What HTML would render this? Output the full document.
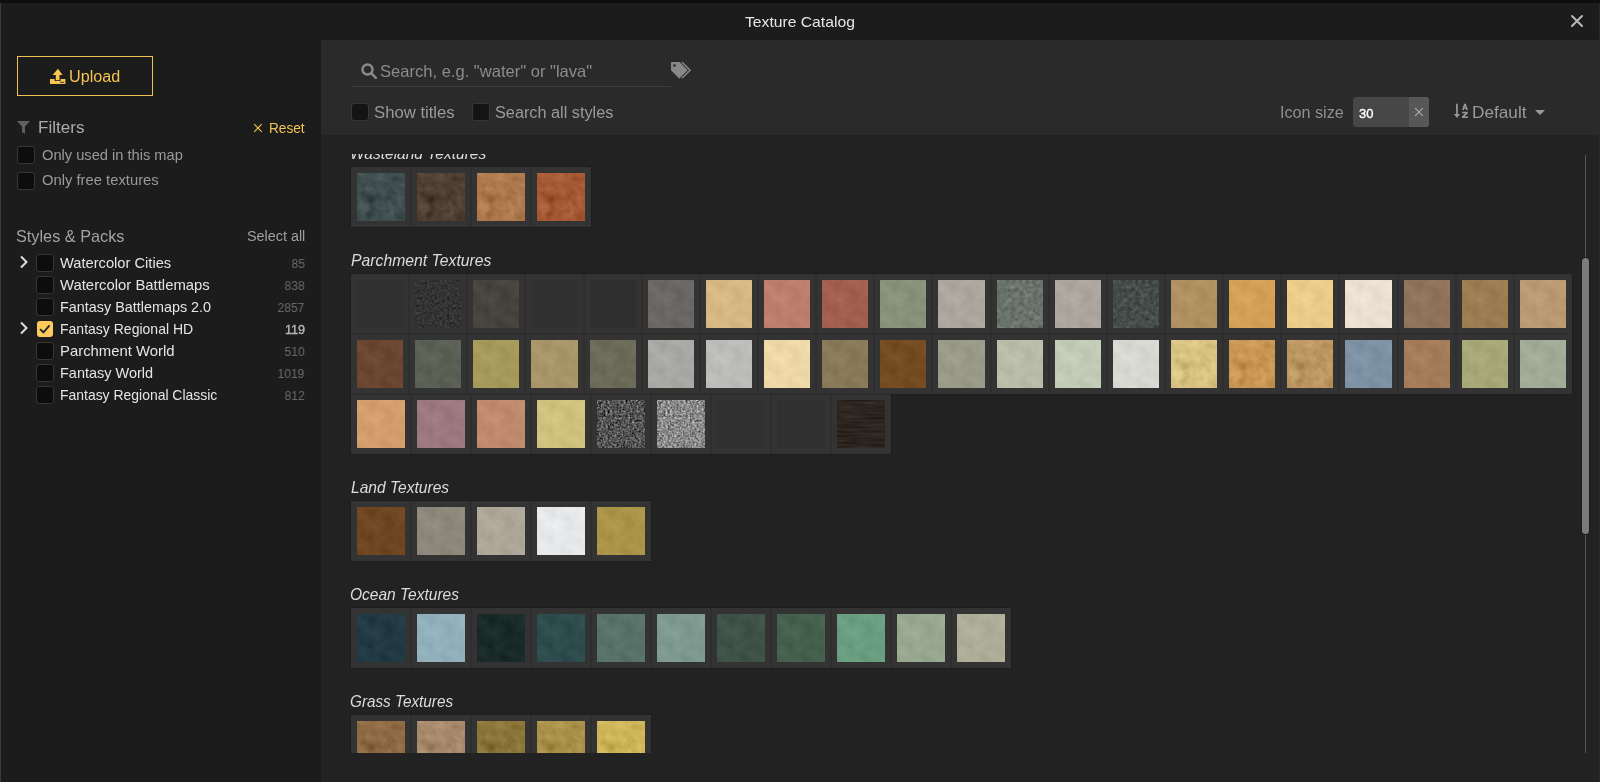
<!DOCTYPE html>
<html><head><meta charset="utf-8"><title>Texture Catalog</title>
<style>
html,body{margin:0;padding:0;}
body{width:1600px;height:782px;overflow:hidden;background:#1c1c1c;position:relative;font-family:"Liberation Sans",sans-serif;}
.t{position:absolute;white-space:nowrap;line-height:1;}
.r{position:absolute;}
</style></head><body>
<svg width="0" height="0" style="position:absolute"><defs>
<filter id="m" x="0" y="0" width="100%" height="100%" color-interpolation-filters="sRGB">
<feTurbulence type="fractalNoise" baseFrequency="0.1" numOctaves="4" seed="7" result="t"/>
<feColorMatrix in="t" type="matrix" values="0.33 0.33 0.33 0 0  0.33 0.33 0.33 0 0  0.33 0.33 0.33 0 0  0 0 0 0 1" result="g"/>
<feComposite in="SourceGraphic" in2="g" operator="arithmetic" k1="0" k2="1" k3="0.35" k4="-0.175" result="b"/>
<feComposite in="b" in2="SourceGraphic" operator="in"/>
</filter>
<filter id="s" x="0" y="0" width="100%" height="100%" color-interpolation-filters="sRGB">
<feTurbulence type="fractalNoise" baseFrequency="0.08" numOctaves="4" seed="11" result="t"/>
<feColorMatrix in="t" type="matrix" values="0.33 0.33 0.33 0 0  0.33 0.33 0.33 0 0  0.33 0.33 0.33 0 0  0 0 0 0 1" result="g"/>
<feComposite in="SourceGraphic" in2="g" operator="arithmetic" k1="0" k2="1" k3="0.16" k4="-0.08" result="b"/>
<feComposite in="b" in2="SourceGraphic" operator="in"/>
</filter>
<filter id="l" x="0" y="0" width="100%" height="100%" color-interpolation-filters="sRGB">
<feTurbulence type="fractalNoise" baseFrequency="0.04 0.45" numOctaves="2" seed="3" result="t"/>
<feColorMatrix in="t" type="matrix" values="0.33 0.33 0.33 0 0  0.33 0.33 0.33 0 0  0.33 0.33 0.33 0 0  0 0 0 0 1" result="g"/>
<feComposite in="SourceGraphic" in2="g" operator="arithmetic" k1="0" k2="1" k3="0.25" k4="-0.14" result="b"/>
<feComposite in="b" in2="SourceGraphic" operator="in"/>
</filter>
<filter id="g" x="0" y="0" width="100%" height="100%" color-interpolation-filters="sRGB">
<feTurbulence type="fractalNoise" baseFrequency="0.45" numOctaves="3" seed="5" result="t"/>
<feColorMatrix in="t" type="matrix" values="0.33 0.33 0.33 0 0  0.33 0.33 0.33 0 0  0.33 0.33 0.33 0 0  0 0 0 0 1" result="g"/>
<feComposite in="SourceGraphic" in2="g" operator="arithmetic" k1="0" k2="1" k3="1.5" k4="-0.75" result="b"/>
<feComposite in="b" in2="SourceGraphic" operator="in"/>
</filter>
<filter id="g3" x="0" y="0" width="100%" height="100%" color-interpolation-filters="sRGB">
<feTurbulence type="fractalNoise" baseFrequency="0.22" numOctaves="4" seed="4" result="t"/>
<feColorMatrix in="t" type="matrix" values="0.33 0.33 0.33 0 0  0.33 0.33 0.33 0 0  0.33 0.33 0.33 0 0  0 0 0 0 1" result="g"/>
<feComposite in="SourceGraphic" in2="g" operator="arithmetic" k1="0" k2="1" k3="0.42" k4="-0.21" result="b"/>
<feComposite in="b" in2="SourceGraphic" operator="in"/>
</filter>
<filter id="g2" x="0" y="0" width="100%" height="100%" color-interpolation-filters="sRGB">
<feTurbulence type="fractalNoise" baseFrequency="0.4" numOctaves="3" seed="9" result="t"/>
<feColorMatrix in="t" type="matrix" values="0.33 0.33 0.33 0 0  0.33 0.33 0.33 0 0  0.33 0.33 0.33 0 0  0 0 0 0 1" result="g"/>
<feComposite in="SourceGraphic" in2="g" operator="arithmetic" k1="0" k2="1" k3="0.38" k4="-0.2" result="b"/>
<feComposite in="b" in2="SourceGraphic" operator="in"/>
</filter>
</defs></svg>
<div class="r" style="left:0px;top:0px;width:1600px;height:3px;background:#0e0e0e;"></div>
<div class="r" style="left:0px;top:3px;width:1px;height:779px;background:#3a3a3a;"></div>
<div class="r" style="left:1599px;top:3px;width:1px;height:779px;background:#2a2a2a;"></div>
<div class="t" style="left:745.30px;top:13.90px;font-size:15px;color:#e6e6e6;transform:scaleX(1.0457);transform-origin:0 0;">Texture Catalog</div>
<svg class="r" style="left:1569px;top:13px" width="16" height="16" viewBox="0 0 16 16"><path d="M3 3L13 13M13 3L3 13" stroke="#b8b8b8" stroke-width="2" stroke-linecap="round"/></svg>
<div class="r" style="left:320px;top:39px;width:1279px;height:743px;background:#1a1a1a;"></div>
<div class="r" style="left:321px;top:40px;width:1278px;height:95px;background:#2a2a2a;"></div>
<div class="r" style="left:321px;top:135px;width:1278px;height:647px;background:#222222;"></div>
<div class="r" style="left:17px;top:56px;width:134px;height:38px;border:1px solid #f2c14e;"></div>
<svg class="r" style="left:50px;top:68px" width="16" height="17" viewBox="0 0 16 17"><path d="M8 0.7L2.5 7H5.8V12.3H9.5V7H12.6Z" fill="#f5c451"/><path d="M-0.1 11H4.7V13.1H10.6V11H15.4V16.1H-0.1Z" fill="#f5c451"/><rect x="10.3" y="13.8" width="1.5" height="1.1" fill="#1c1c1c"/><rect x="12.3" y="13.8" width="1.5" height="1.1" fill="#1c1c1c"/></svg>
<div class="t" style="left:68.79px;top:68.96px;font-size:16px;color:#f5c451;transform:scaleX(1.0102);transform-origin:0 0;">Upload</div>
<svg class="r" style="left:17px;top:121px" width="13" height="13" viewBox="0 0 13 13"><path d="M0 0H13L8 5.5V13L5 11V5.5Z" fill="#606060"/></svg>
<div class="t" style="left:37.97px;top:119.95px;font-size:16.6px;color:#ababab;transform:scaleX(1.0273);transform-origin:0 0;">Filters</div>
<svg class="r" style="left:253px;top:123px" width="10" height="10" viewBox="0 0 10 10"><path d="M1.2 1.2L8.8 8.8M8.8 1.2L1.2 8.8" stroke="#f5c451" stroke-width="1.1"/></svg>
<div class="t" style="left:269.23px;top:121.15px;font-size:14px;color:#f5c451;transform:scaleX(0.9722);transform-origin:0 0;">Reset</div>
<div class="r" style="left:17px;top:146px;width:16px;height:16px;background:#0d0d0d;border:1px solid #3a3530;border-radius:3px;"></div>
<div class="t" style="left:41.80px;top:147.94px;font-size:14.6px;color:#9a9a9a;transform:scaleX(1.0036);transform-origin:0 0;">Only used in this map</div>
<div class="r" style="left:17px;top:172px;width:16px;height:16px;background:#0d0d0d;border:1px solid #3a3530;border-radius:3px;"></div>
<div class="t" style="left:41.80px;top:173.44px;font-size:14.6px;color:#9a9a9a;transform:scaleX(1.0130);transform-origin:0 0;">Only free textures</div>
<div class="t" style="left:16.21px;top:228.42px;font-size:16.4px;color:#a3a3a3;transform:scaleX(0.9917);transform-origin:0 0;">Styles &amp; Packs</div>
<div class="t" style="left:247.17px;top:229.15px;font-size:14px;color:#a0a0a0;transform:scaleX(1.0255);transform-origin:0 0;">Select all</div>
<svg class="r" style="left:19px;top:255px" width="10" height="14" viewBox="0 0 10 14"><path d="M2 1.5L7.5 7L2 12.5" stroke="#dedede" stroke-width="2" fill="none"/></svg>
<div class="r" style="left:36px;top:254px;width:16px;height:16px;background:#0d0d0d;border:1px solid #3a3530;border-radius:3px;"></div>
<div class="t" style="left:60.10px;top:255.64px;font-size:14.6px;color:#e4e4e4;transform:scaleX(1.0055);transform-origin:0 0;">Watercolor Cities</div>
<div class="t" style="left:291.60px;top:257.64px;font-size:12px;color:#666;">85</div>
<div class="r" style="left:36px;top:276px;width:16px;height:16px;background:#0d0d0d;border:1px solid #3a3530;border-radius:3px;"></div>
<div class="t" style="left:60.10px;top:277.64px;font-size:14.6px;color:#e4e4e4;transform:scaleX(1.0184);transform-origin:0 0;">Watercolor Battlemaps</div>
<div class="t" style="left:284.60px;top:279.64px;font-size:12px;color:#666;">838</div>
<div class="r" style="left:36px;top:298px;width:16px;height:16px;background:#0d0d0d;border:1px solid #3a3530;border-radius:3px;"></div>
<div class="t" style="left:60.01px;top:299.64px;font-size:14.6px;color:#e4e4e4;transform:scaleX(0.9855);transform-origin:0 0;">Fantasy Battlemaps 2.0</div>
<div class="t" style="left:277.60px;top:301.64px;font-size:12px;color:#666;">2857</div>
<svg class="r" style="left:19px;top:321px" width="10" height="14" viewBox="0 0 10 14"><path d="M2 1.5L7.5 7L2 12.5" stroke="#dedede" stroke-width="2" fill="none"/></svg>
<div class="r" style="left:37px;top:321px;width:16px;height:16px;background:#fccb5c;border-radius:3px;"></div>
<svg class="r" style="left:37px;top:321px" width="16" height="16" viewBox="0 0 17 17"><path d="M3.2 8.6L6.8 12L13.4 4.6" stroke="#262626" stroke-width="2" fill="none"/></svg>
<div class="t" style="left:60.04px;top:321.64px;font-size:14.6px;color:#e4e4e4;transform:scaleX(0.9601);transform-origin:0 0;">Fantasy Regional HD</div>
<div class="t" style="left:284.60px;top:323.64px;font-size:12px;color:#b8b8b8;-webkit-text-stroke:0.35px #b8b8b8;transform:scaleX(1.0526);transform-origin:0 0;">119</div>
<div class="r" style="left:36px;top:342px;width:16px;height:16px;background:#0d0d0d;border:1px solid #3a3530;border-radius:3px;"></div>
<div class="t" style="left:59.98px;top:343.64px;font-size:14.6px;color:#e4e4e4;transform:scaleX(1.0189);transform-origin:0 0;">Parchment World</div>
<div class="t" style="left:284.60px;top:345.64px;font-size:12px;color:#666;">510</div>
<div class="r" style="left:36px;top:364px;width:16px;height:16px;background:#0d0d0d;border:1px solid #3a3530;border-radius:3px;"></div>
<div class="t" style="left:60.01px;top:365.64px;font-size:14.6px;color:#e4e4e4;transform:scaleX(0.9924);transform-origin:0 0;">Fantasy World</div>
<div class="t" style="left:277.60px;top:367.64px;font-size:12px;color:#666;">1019</div>
<div class="r" style="left:36px;top:386px;width:16px;height:16px;background:#0d0d0d;border:1px solid #3a3530;border-radius:3px;"></div>
<div class="t" style="left:60.04px;top:387.64px;font-size:14.6px;color:#e4e4e4;transform:scaleX(0.9552);transform-origin:0 0;">Fantasy Regional Classic</div>
<div class="t" style="left:284.60px;top:389.64px;font-size:12px;color:#666;">812</div>
<svg class="r" style="left:361px;top:63px" width="16" height="16" viewBox="0 0 16 16"><circle cx="6.5" cy="6.5" r="5" stroke="#8a8a8a" stroke-width="2.4" fill="none"/><path d="M10.2 10.2L14.8 14.8" stroke="#8a8a8a" stroke-width="2.6" stroke-linecap="round"/></svg>
<div class="t" style="left:380.30px;top:63.13px;font-size:16.5px;color:#8c8c8c;transform:scaleX(1.0033);transform-origin:0 0;">Search, e.g. "water" or "lava"</div>
<div class="r" style="left:351px;top:86px;width:320px;height:1px;background:#433e38;"></div>
<svg class="r" style="left:670px;top:61px" width="24" height="20" viewBox="-1 -1 24 20"><path fill-rule="evenodd" d="M0.6 0.6H8.3L15.9 8.2L8.3 15.8L0.6 8.1ZM3.5 2.2A1.3 1.3 0 1 0 3.51 2.2Z" fill="#888" stroke="#888" stroke-width="1.2" stroke-linejoin="round"/><circle cx="3.5" cy="3.5" r="1.3" fill="#2a2a2a"/><path d="M10.6 0.5H12.1L19.8 8.2L12.1 15.9H10.6L18.3 8.2Z" fill="#888" stroke="#888" stroke-width="0.6" stroke-linejoin="round"/></svg>
<div class="r" style="left:351px;top:103px;width:16px;height:16px;background:#141414;border:1px solid #3a3530;border-radius:3px;"></div>
<div class="t" style="left:374.49px;top:103.73px;font-size:16.5px;color:#9a9a9a;transform:scaleX(1.0114);transform-origin:0 0;">Show titles</div>
<div class="r" style="left:472px;top:103px;width:16px;height:16px;background:#141414;border:1px solid #3a3530;border-radius:3px;"></div>
<div class="t" style="left:495.48px;top:104.86px;font-size:16px;color:#9a9a9a;transform:scaleX(1.0165);transform-origin:0 0;">Search all styles</div>
<div class="t" style="left:1280.48px;top:104.83px;font-size:15.8px;color:#8f8f8f;transform:scaleX(1.0230);transform-origin:0 0;">Icon size</div>
<div class="r" style="left:1353px;top:97px;width:76px;height:30px;background:#474747;border-radius:3px;"></div>
<div class="r" style="left:1409px;top:97px;width:20px;height:30px;background:#575757;border-radius:0 3px 3px 0;"></div>
<svg class="r" style="left:1414px;top:107px" width="10" height="10" viewBox="0 0 10 10"><path d="M1.2 1.2L8.8 8.8M8.8 1.2L1.2 8.8" stroke="#b0b0b0" stroke-width="1.1"/></svg>
<div class="t" style="left:1359.00px;top:106.63px;font-size:13.2px;color:#ffffff;-webkit-text-stroke:0.35px #fff;transform:scaleX(0.9867);transform-origin:0 0;">30</div>
<svg class="r" style="left:1453px;top:103px" width="16" height="16" viewBox="0 0 16 16"><path d="M3.1 0.8H4.8V11.5H3.1Z" fill="#999"/><path d="M0.9 11.1H7L3.95 14.9Z" fill="#999"/><path fill-rule="evenodd" d="M9 7L11.2 0.8H12.8L15 7H13.3L12.9 5.8H11.1L10.7 7ZM11.45 4.6H12.55L12 2.9Z" fill="#999"/><path d="M9.2 8.8H14.8V10.2L11.5 13.5H15V14.9H9V13.5L12.3 10.2H9.2Z" fill="#999"/></svg>
<div class="t" style="left:1472.39px;top:103.61px;font-size:17px;color:#9a9a9a;transform:scaleX(1.0113);transform-origin:0 0;">Default</div>
<svg class="r" style="left:1535px;top:110px" width="10" height="5" viewBox="0 0 10 5"><path d="M0 0H10L5 5Z" fill="#999"/></svg>
<div class="r" style="left:321px;top:154px;width:1278px;height:599px;overflow:hidden;"><div style="position:absolute;left:-321px;top:-154px;width:1600px;height:900px;">
<div class="t" style="left:350.09px;top:145.11px;font-size:17px;color:#dcdcdc;font-style:italic;transform:scaleX(0.9122);transform-origin:0 0;">Wasteland Textures</div>
<div class="r" style="left:350px;top:166px;width:242px;height:62px;background:#1d1d1d;"></div>
<div class="r" style="left:351px;top:167px;width:240px;height:60px;background:#333333;"></div>
<svg class="r" style="left:357px;top:173px" width="48" height="48"><rect width="48" height="48" fill="#3f4d4f" filter="url(#m)"/></svg>
<svg class="r" style="left:417px;top:173px" width="48" height="48"><rect width="48" height="48" fill="#4e3f32" filter="url(#m)"/></svg>
<svg class="r" style="left:477px;top:173px" width="48" height="48"><rect width="48" height="48" fill="#ad784c" filter="url(#m)"/></svg>
<svg class="r" style="left:537px;top:173px" width="48" height="48"><rect width="48" height="48" fill="#a45833" filter="url(#m)"/></svg>
<div class="r" style="left:410px;top:167px;width:2px;height:60px;background:#2e2e2e;"></div>
<div class="r" style="left:470px;top:167px;width:2px;height:60px;background:#2e2e2e;"></div>
<div class="r" style="left:530px;top:167px;width:2px;height:60px;background:#2e2e2e;"></div>
<div class="t" style="left:351.00px;top:251.61px;font-size:17px;color:#dcdcdc;font-style:italic;transform:scaleX(0.9272);transform-origin:0 0;">Parchment Textures</div>
<div class="r" style="left:350px;top:273px;width:1223px;height:62px;background:#1d1d1d;"></div>
<div class="r" style="left:350px;top:333px;width:1223px;height:62px;background:#1d1d1d;"></div>
<div class="r" style="left:350px;top:393px;width:542px;height:62px;background:#1d1d1d;"></div>
<div class="r" style="left:351px;top:274px;width:1221px;height:60px;background:#333333;"></div>
<svg class="r" style="left:357px;top:280px" width="46" height="48"><rect width="46" height="48" fill="#313131"/></svg>
<svg class="r" style="left:415px;top:280px" width="46" height="48"><rect width="46" height="48" fill="#363636" filter="url(#g2)"/></svg>
<svg class="r" style="left:473px;top:280px" width="46" height="48"><rect width="46" height="48" fill="#47433f" filter="url(#s)"/></svg>
<svg class="r" style="left:531px;top:280px" width="47" height="48"><rect width="47" height="48" fill="#313131"/></svg>
<svg class="r" style="left:590px;top:280px" width="46" height="48"><rect width="46" height="48" fill="#2f2f2f"/></svg>
<svg class="r" style="left:648px;top:280px" width="46" height="48"><rect width="46" height="48" fill="#6b6764" filter="url(#s)"/></svg>
<svg class="r" style="left:706px;top:280px" width="46" height="48"><rect width="46" height="48" fill="#d6b883" filter="url(#s)"/></svg>
<svg class="r" style="left:764px;top:280px" width="46" height="48"><rect width="46" height="48" fill="#bd7f6c" filter="url(#s)"/></svg>
<svg class="r" style="left:822px;top:280px" width="46" height="48"><rect width="46" height="48" fill="#a25f4f" filter="url(#s)"/></svg>
<svg class="r" style="left:880px;top:280px" width="46" height="48"><rect width="46" height="48" fill="#88927a" filter="url(#s)"/></svg>
<svg class="r" style="left:938px;top:280px" width="47" height="48"><rect width="47" height="48" fill="#ada69e" filter="url(#s)"/></svg>
<svg class="r" style="left:997px;top:280px" width="46" height="48"><rect width="46" height="48" fill="#6a726c" filter="url(#g3)"/></svg>
<svg class="r" style="left:1055px;top:280px" width="46" height="48"><rect width="46" height="48" fill="#ada69e" filter="url(#s)"/></svg>
<svg class="r" style="left:1113px;top:280px" width="46" height="48"><rect width="46" height="48" fill="#464c4a" filter="url(#g3)"/></svg>
<svg class="r" style="left:1171px;top:280px" width="46" height="48"><rect width="46" height="48" fill="#b09060" filter="url(#s)"/></svg>
<svg class="r" style="left:1229px;top:280px" width="46" height="48"><rect width="46" height="48" fill="#d4a055" filter="url(#s)"/></svg>
<svg class="r" style="left:1287px;top:280px" width="46" height="48"><rect width="46" height="48" fill="#ebcc88" filter="url(#s)"/></svg>
<svg class="r" style="left:1345px;top:280px" width="47" height="48"><rect width="47" height="48" fill="#ebe0d2" filter="url(#s)"/></svg>
<svg class="r" style="left:1404px;top:280px" width="46" height="48"><rect width="46" height="48" fill="#8f735a" filter="url(#s)"/></svg>
<svg class="r" style="left:1462px;top:280px" width="46" height="48"><rect width="46" height="48" fill="#9c7c50" filter="url(#s)"/></svg>
<svg class="r" style="left:1520px;top:280px" width="46" height="48"><rect width="46" height="48" fill="#b99a72" filter="url(#s)"/></svg>
<div class="r" style="left:408px;top:274px;width:2px;height:60px;background:#2e2e2e;"></div>
<div class="r" style="left:466px;top:274px;width:2px;height:60px;background:#2e2e2e;"></div>
<div class="r" style="left:524px;top:274px;width:2px;height:60px;background:#2e2e2e;"></div>
<div class="r" style="left:583px;top:274px;width:2px;height:60px;background:#2e2e2e;"></div>
<div class="r" style="left:641px;top:274px;width:2px;height:60px;background:#2e2e2e;"></div>
<div class="r" style="left:699px;top:274px;width:2px;height:60px;background:#2e2e2e;"></div>
<div class="r" style="left:757px;top:274px;width:2px;height:60px;background:#2e2e2e;"></div>
<div class="r" style="left:815px;top:274px;width:2px;height:60px;background:#2e2e2e;"></div>
<div class="r" style="left:873px;top:274px;width:2px;height:60px;background:#2e2e2e;"></div>
<div class="r" style="left:931px;top:274px;width:2px;height:60px;background:#2e2e2e;"></div>
<div class="r" style="left:990px;top:274px;width:2px;height:60px;background:#2e2e2e;"></div>
<div class="r" style="left:1048px;top:274px;width:2px;height:60px;background:#2e2e2e;"></div>
<div class="r" style="left:1106px;top:274px;width:2px;height:60px;background:#2e2e2e;"></div>
<div class="r" style="left:1164px;top:274px;width:2px;height:60px;background:#2e2e2e;"></div>
<div class="r" style="left:1222px;top:274px;width:2px;height:60px;background:#2e2e2e;"></div>
<div class="r" style="left:1280px;top:274px;width:2px;height:60px;background:#2e2e2e;"></div>
<div class="r" style="left:1338px;top:274px;width:2px;height:60px;background:#2e2e2e;"></div>
<div class="r" style="left:1397px;top:274px;width:2px;height:60px;background:#2e2e2e;"></div>
<div class="r" style="left:1455px;top:274px;width:2px;height:60px;background:#2e2e2e;"></div>
<div class="r" style="left:1513px;top:274px;width:2px;height:60px;background:#2e2e2e;"></div>
<div class="r" style="left:351px;top:334px;width:1221px;height:60px;background:#333333;"></div>
<svg class="r" style="left:357px;top:340px" width="46" height="48"><rect width="46" height="48" fill="#6b4630" filter="url(#s)"/></svg>
<svg class="r" style="left:415px;top:340px" width="46" height="48"><rect width="46" height="48" fill="#5b6054" filter="url(#s)"/></svg>
<svg class="r" style="left:473px;top:340px" width="46" height="48"><rect width="46" height="48" fill="#a69a5a" filter="url(#s)"/></svg>
<svg class="r" style="left:531px;top:340px" width="47" height="48"><rect width="47" height="48" fill="#a89668" filter="url(#s)"/></svg>
<svg class="r" style="left:590px;top:340px" width="46" height="48"><rect width="46" height="48" fill="#6c6a58" filter="url(#s)"/></svg>
<svg class="r" style="left:648px;top:340px" width="46" height="48"><rect width="46" height="48" fill="#a8a8a5" filter="url(#s)"/></svg>
<svg class="r" style="left:706px;top:340px" width="46" height="48"><rect width="46" height="48" fill="#bcbcba" filter="url(#s)"/></svg>
<svg class="r" style="left:764px;top:340px" width="46" height="48"><rect width="46" height="48" fill="#eed8a8" filter="url(#s)"/></svg>
<svg class="r" style="left:822px;top:340px" width="46" height="48"><rect width="46" height="48" fill="#887a58" filter="url(#s)"/></svg>
<svg class="r" style="left:880px;top:340px" width="46" height="48"><rect width="46" height="48" fill="#744c22" filter="url(#s)"/></svg>
<svg class="r" style="left:938px;top:340px" width="47" height="48"><rect width="47" height="48" fill="#9a9a88" filter="url(#s)"/></svg>
<svg class="r" style="left:997px;top:340px" width="46" height="48"><rect width="46" height="48" fill="#b8bca8" filter="url(#s)"/></svg>
<svg class="r" style="left:1055px;top:340px" width="46" height="48"><rect width="46" height="48" fill="#c2cbb6" filter="url(#s)"/></svg>
<svg class="r" style="left:1113px;top:340px" width="46" height="48"><rect width="46" height="48" fill="#d8d8d2" filter="url(#s)"/></svg>
<svg class="r" style="left:1171px;top:340px" width="46" height="48"><rect width="46" height="48" fill="#d8c282" filter="url(#m)"/></svg>
<svg class="r" style="left:1229px;top:340px" width="46" height="48"><rect width="46" height="48" fill="#c99552" filter="url(#m)"/></svg>
<svg class="r" style="left:1287px;top:340px" width="46" height="48"><rect width="46" height="48" fill="#bc9660" filter="url(#m)"/></svg>
<svg class="r" style="left:1345px;top:340px" width="47" height="48"><rect width="47" height="48" fill="#7d93a5" filter="url(#s)"/></svg>
<svg class="r" style="left:1404px;top:340px" width="46" height="48"><rect width="46" height="48" fill="#a47c5a" filter="url(#s)"/></svg>
<svg class="r" style="left:1462px;top:340px" width="46" height="48"><rect width="46" height="48" fill="#a6a878" filter="url(#s)"/></svg>
<svg class="r" style="left:1520px;top:340px" width="46" height="48"><rect width="46" height="48" fill="#a2aa98" filter="url(#s)"/></svg>
<div class="r" style="left:408px;top:334px;width:2px;height:60px;background:#2e2e2e;"></div>
<div class="r" style="left:466px;top:334px;width:2px;height:60px;background:#2e2e2e;"></div>
<div class="r" style="left:524px;top:334px;width:2px;height:60px;background:#2e2e2e;"></div>
<div class="r" style="left:583px;top:334px;width:2px;height:60px;background:#2e2e2e;"></div>
<div class="r" style="left:641px;top:334px;width:2px;height:60px;background:#2e2e2e;"></div>
<div class="r" style="left:699px;top:334px;width:2px;height:60px;background:#2e2e2e;"></div>
<div class="r" style="left:757px;top:334px;width:2px;height:60px;background:#2e2e2e;"></div>
<div class="r" style="left:815px;top:334px;width:2px;height:60px;background:#2e2e2e;"></div>
<div class="r" style="left:873px;top:334px;width:2px;height:60px;background:#2e2e2e;"></div>
<div class="r" style="left:931px;top:334px;width:2px;height:60px;background:#2e2e2e;"></div>
<div class="r" style="left:990px;top:334px;width:2px;height:60px;background:#2e2e2e;"></div>
<div class="r" style="left:1048px;top:334px;width:2px;height:60px;background:#2e2e2e;"></div>
<div class="r" style="left:1106px;top:334px;width:2px;height:60px;background:#2e2e2e;"></div>
<div class="r" style="left:1164px;top:334px;width:2px;height:60px;background:#2e2e2e;"></div>
<div class="r" style="left:1222px;top:334px;width:2px;height:60px;background:#2e2e2e;"></div>
<div class="r" style="left:1280px;top:334px;width:2px;height:60px;background:#2e2e2e;"></div>
<div class="r" style="left:1338px;top:334px;width:2px;height:60px;background:#2e2e2e;"></div>
<div class="r" style="left:1397px;top:334px;width:2px;height:60px;background:#2e2e2e;"></div>
<div class="r" style="left:1455px;top:334px;width:2px;height:60px;background:#2e2e2e;"></div>
<div class="r" style="left:1513px;top:334px;width:2px;height:60px;background:#2e2e2e;"></div>
<div class="r" style="left:351px;top:333px;width:1221px;height:2px;background:#2e2e2e;"></div>
<div class="r" style="left:351px;top:394px;width:540px;height:60px;background:#333333;"></div>
<svg class="r" style="left:357px;top:400px" width="48" height="48"><rect width="48" height="48" fill="#d49e6c" filter="url(#s)"/></svg>
<svg class="r" style="left:417px;top:400px" width="48" height="48"><rect width="48" height="48" fill="#9c7880" filter="url(#s)"/></svg>
<svg class="r" style="left:477px;top:400px" width="48" height="48"><rect width="48" height="48" fill="#c08a6e" filter="url(#s)"/></svg>
<svg class="r" style="left:537px;top:400px" width="48" height="48"><rect width="48" height="48" fill="#cec27e" filter="url(#s)"/></svg>
<svg class="r" style="left:597px;top:400px" width="48" height="48"><rect width="48" height="48" fill="#555555" filter="url(#g)"/></svg>
<svg class="r" style="left:657px;top:400px" width="48" height="48"><rect width="48" height="48" fill="#8a8a8a" filter="url(#g)"/></svg>
<svg class="r" style="left:717px;top:400px" width="48" height="48"><rect width="48" height="48" fill="#313131"/></svg>
<svg class="r" style="left:777px;top:400px" width="48" height="48"><rect width="48" height="48" fill="#303030"/></svg>
<svg class="r" style="left:837px;top:400px" width="48" height="48"><rect width="48" height="48" fill="#302822" filter="url(#l)"/></svg>
<div class="r" style="left:410px;top:394px;width:2px;height:60px;background:#2e2e2e;"></div>
<div class="r" style="left:470px;top:394px;width:2px;height:60px;background:#2e2e2e;"></div>
<div class="r" style="left:530px;top:394px;width:2px;height:60px;background:#2e2e2e;"></div>
<div class="r" style="left:590px;top:394px;width:2px;height:60px;background:#2e2e2e;"></div>
<div class="r" style="left:650px;top:394px;width:2px;height:60px;background:#2e2e2e;"></div>
<div class="r" style="left:710px;top:394px;width:2px;height:60px;background:#2e2e2e;"></div>
<div class="r" style="left:770px;top:394px;width:2px;height:60px;background:#2e2e2e;"></div>
<div class="r" style="left:830px;top:394px;width:2px;height:60px;background:#2e2e2e;"></div>
<div class="r" style="left:351px;top:393px;width:540px;height:2px;background:#2e2e2e;"></div>
<div class="t" style="left:351.00px;top:478.61px;font-size:17px;color:#dcdcdc;font-style:italic;transform:scaleX(0.9159);transform-origin:0 0;">Land Textures</div>
<div class="r" style="left:350px;top:500px;width:302px;height:62px;background:#1d1d1d;"></div>
<div class="r" style="left:351px;top:501px;width:300px;height:60px;background:#333333;"></div>
<svg class="r" style="left:357px;top:507px" width="48" height="48"><rect width="48" height="48" fill="#6e4622" filter="url(#s)"/></svg>
<svg class="r" style="left:417px;top:507px" width="48" height="48"><rect width="48" height="48" fill="#8c887c" filter="url(#s)"/></svg>
<svg class="r" style="left:477px;top:507px" width="48" height="48"><rect width="48" height="48" fill="#ada699" filter="url(#s)"/></svg>
<svg class="r" style="left:537px;top:507px" width="48" height="48"><rect width="48" height="48" fill="#e6e8ea" filter="url(#s)"/></svg>
<svg class="r" style="left:597px;top:507px" width="48" height="48"><rect width="48" height="48" fill="#ab9448" filter="url(#s)"/></svg>
<div class="r" style="left:410px;top:501px;width:2px;height:60px;background:#2e2e2e;"></div>
<div class="r" style="left:470px;top:501px;width:2px;height:60px;background:#2e2e2e;"></div>
<div class="r" style="left:530px;top:501px;width:2px;height:60px;background:#2e2e2e;"></div>
<div class="r" style="left:590px;top:501px;width:2px;height:60px;background:#2e2e2e;"></div>
<div class="t" style="left:350.09px;top:585.61px;font-size:17px;color:#dcdcdc;font-style:italic;transform:scaleX(0.9127);transform-origin:0 0;">Ocean Textures</div>
<div class="r" style="left:350px;top:607px;width:662px;height:62px;background:#1d1d1d;"></div>
<div class="r" style="left:351px;top:608px;width:660px;height:60px;background:#333333;"></div>
<svg class="r" style="left:357px;top:614px" width="48" height="48"><rect width="48" height="48" fill="#223a44" filter="url(#s)"/></svg>
<svg class="r" style="left:417px;top:614px" width="48" height="48"><rect width="48" height="48" fill="#92b0bc" filter="url(#s)"/></svg>
<svg class="r" style="left:477px;top:614px" width="48" height="48"><rect width="48" height="48" fill="#1a2a28" filter="url(#s)"/></svg>
<svg class="r" style="left:537px;top:614px" width="48" height="48"><rect width="48" height="48" fill="#2e4c4e" filter="url(#s)"/></svg>
<svg class="r" style="left:597px;top:614px" width="48" height="48"><rect width="48" height="48" fill="#58726a" filter="url(#s)"/></svg>
<svg class="r" style="left:657px;top:614px" width="48" height="48"><rect width="48" height="48" fill="#7e9a90" filter="url(#s)"/></svg>
<svg class="r" style="left:717px;top:614px" width="48" height="48"><rect width="48" height="48" fill="#3e5248" filter="url(#s)"/></svg>
<svg class="r" style="left:777px;top:614px" width="48" height="48"><rect width="48" height="48" fill="#45614e" filter="url(#s)"/></svg>
<svg class="r" style="left:837px;top:614px" width="48" height="48"><rect width="48" height="48" fill="#6a9e80" filter="url(#s)"/></svg>
<svg class="r" style="left:897px;top:614px" width="48" height="48"><rect width="48" height="48" fill="#98a890" filter="url(#s)"/></svg>
<svg class="r" style="left:957px;top:614px" width="48" height="48"><rect width="48" height="48" fill="#aeae98" filter="url(#s)"/></svg>
<div class="r" style="left:410px;top:608px;width:2px;height:60px;background:#2e2e2e;"></div>
<div class="r" style="left:470px;top:608px;width:2px;height:60px;background:#2e2e2e;"></div>
<div class="r" style="left:530px;top:608px;width:2px;height:60px;background:#2e2e2e;"></div>
<div class="r" style="left:590px;top:608px;width:2px;height:60px;background:#2e2e2e;"></div>
<div class="r" style="left:650px;top:608px;width:2px;height:60px;background:#2e2e2e;"></div>
<div class="r" style="left:710px;top:608px;width:2px;height:60px;background:#2e2e2e;"></div>
<div class="r" style="left:770px;top:608px;width:2px;height:60px;background:#2e2e2e;"></div>
<div class="r" style="left:830px;top:608px;width:2px;height:60px;background:#2e2e2e;"></div>
<div class="r" style="left:890px;top:608px;width:2px;height:60px;background:#2e2e2e;"></div>
<div class="r" style="left:950px;top:608px;width:2px;height:60px;background:#2e2e2e;"></div>
<div class="t" style="left:350.10px;top:692.61px;font-size:17px;color:#dcdcdc;font-style:italic;transform:scaleX(0.8991);transform-origin:0 0;">Grass Textures</div>
<div class="r" style="left:350px;top:714px;width:302px;height:62px;background:#1d1d1d;"></div>
<div class="r" style="left:351px;top:715px;width:300px;height:60px;background:#333333;"></div>
<svg class="r" style="left:357px;top:721px" width="48" height="48"><rect width="48" height="48" fill="#8e6a44" filter="url(#m)"/></svg>
<svg class="r" style="left:417px;top:721px" width="48" height="48"><rect width="48" height="48" fill="#a6886a" filter="url(#m)"/></svg>
<svg class="r" style="left:477px;top:721px" width="48" height="48"><rect width="48" height="48" fill="#8a7438" filter="url(#m)"/></svg>
<svg class="r" style="left:537px;top:721px" width="48" height="48"><rect width="48" height="48" fill="#a89048" filter="url(#m)"/></svg>
<svg class="r" style="left:597px;top:721px" width="48" height="48"><rect width="48" height="48" fill="#ceb458" filter="url(#m)"/></svg>
<div class="r" style="left:410px;top:715px;width:2px;height:60px;background:#2e2e2e;"></div>
<div class="r" style="left:470px;top:715px;width:2px;height:60px;background:#2e2e2e;"></div>
<div class="r" style="left:530px;top:715px;width:2px;height:60px;background:#2e2e2e;"></div>
<div class="r" style="left:590px;top:715px;width:2px;height:60px;background:#2e2e2e;"></div>
</div></div>
<div class="r" style="left:1585px;top:155px;width:1px;height:598px;background:#555555;"></div>
<div class="r" style="left:1581px;top:257px;width:9px;height:278px;background:#1e1e1e;border-radius:4.5px;"></div>
<div class="r" style="left:1582px;top:258px;width:7px;height:276px;background:#7c7c7c;border-radius:3.5px;"></div>
</body></html>
